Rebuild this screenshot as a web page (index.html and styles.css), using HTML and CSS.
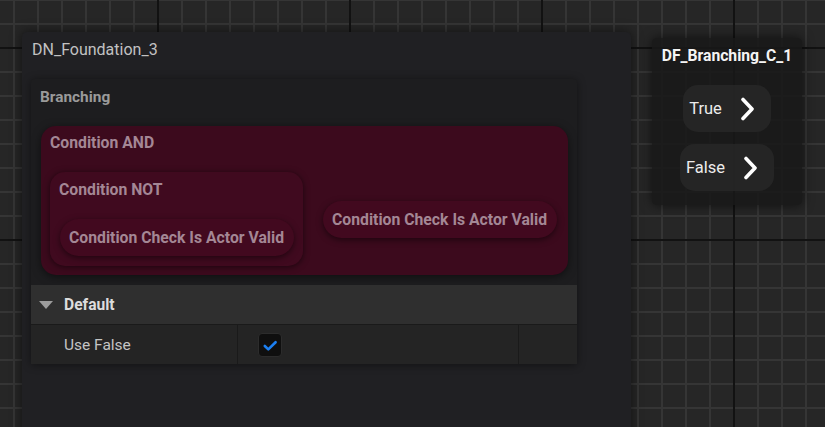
FILE: index.html
```html
<!DOCTYPE html>
<html lang="en">
<head>
<meta charset="utf-8">
<title>Graph</title>
<link rel="stylesheet" href="styles.css">
</head>
<body>
<div class="canvas">
  <section class="node node-main">
    <div class="node-title">DN_Foundation_3</div>
    <div class="card">
      <div class="card-title">Branching</div>
      <div class="cond cond-and">
        <div class="cond-title">Condition AND</div>
        <div class="cond-body">
          <div class="cond cond-not">
            <div class="cond-title">Condition NOT</div>
            <div class="pill">Condition Check Is Actor Valid</div>
          </div>
          <div class="pill">Condition Check Is Actor Valid</div>
        </div>
      </div>
      <div class="cat-header"><span class="caret"></span><span>Default</span></div>
      <div class="prop-row">
        <div class="prop-name">Use False</div>
        <div class="prop-value">
          <span class="checkbox">
            <svg width="24" height="24" viewBox="0 0 24 24"><polyline points="6.8,13 10.3,16.4 17.6,9.2" fill="none" stroke="#1c7ff0" stroke-width="2.6" stroke-linecap="round" stroke-linejoin="round"/></svg>
          </span>
        </div>
        <div class="prop-extra"></div>
      </div>
    </div>
  </section>

  <section class="node node-branch">
    <div class="branch-title">DF_Branching_C_1</div>
    <div class="outputs">
      <div class="out-pin"><span>True</span>
        <svg width="24" height="24" viewBox="0 0 24 24"><polyline points="8,2.5 17,12 8,21.5" fill="none" stroke="#ffffff" stroke-width="3.6" stroke-linecap="round" stroke-linejoin="round"/></svg>
      </div>
      <div class="out-pin"><span>False</span>
        <svg width="24" height="24" viewBox="0 0 24 24"><polyline points="8,2.5 17,12 8,21.5" fill="none" stroke="#ffffff" stroke-width="3.6" stroke-linecap="round" stroke-linejoin="round"/></svg>
      </div>
    </div>
  </section>
</div>
</body>
</html>
```

FILE: styles.css
```css
html, body {
  margin: 0;
  padding: 0;
}

body {
  width: 825px;
  height: 427px;
  overflow: hidden;
  font-family: Roboto, "Noto Sans", "Liberation Sans", sans-serif;
  background-color: #262626;
  background-image:
    linear-gradient(to right, #121212 2px, transparent 2px),
    linear-gradient(to bottom, #121212 2px, transparent 2px),
    linear-gradient(to right, #353535 2px, transparent 2px),
    linear-gradient(to bottom, #353535 2px, transparent 2px);
  background-size: 192px 192px, 192px 192px, 24px 24px, 24px 24px;
  background-position: 157px 0, 0 47px, 13px 0, 0 23px;
}

.canvas {
  position: relative;
  width: 825px;
  height: 427px;
  overflow: hidden;
}

/* ---------- main node ---------- */
.node-main {
  position: absolute;
  left: 22px;
  top: 32px;
  width: 609px;
  height: 420px;
  box-sizing: border-box;
  padding: 8px 0 0 9px;
  background: #202023;
  border-radius: 5px;
  box-shadow: 0 0 12px rgba(0, 0, 0, 0.55);
}

.node-title {
  padding-left: 1px;
  font-size: 16px;
  line-height: 20px;
  color: #c2c2c2;
}

.card {
  margin-top: 19px;
  width: 546px;
  padding-top: 8px;
  background: #1d1d1f;
  border-radius: 4px 4px 0 0;
  box-shadow: 0 1px 8px rgba(0, 0, 0, 0.45);
}

.card-title {
  padding-left: 9px;
  font-size: 15.4px;
  font-weight: 700;
  line-height: 20px;
  color: #9a9a9a;
}

.cond {
  border-radius: 15px;
}

.cond-title {
  font-size: 15.75px;
  font-weight: 700;
  line-height: 20px;
  color: #a48795;
}

.cond-and {
  margin: 19px 9px 10px 10px;
  padding: 7px 10px 9px 9px;
  background: #3c0a1d;
  box-shadow: 0 2px 8px rgba(0, 0, 0, 0.5);
}

.cond-body {
  margin-top: 19px;
  display: flex;
  align-items: center;
  gap: 20px;
}

.cond-not {
  padding: 8px 9px 10px 10px;
  background: #400a1f;
  box-shadow: 0 1px 6px rgba(0, 0, 0, 0.55);
}

.cond-not .cond-title {
  margin-left: -1px;
}

.cond-not .pill {
  margin-top: 19px;
}

.pill {
  display: flex;
  align-items: center;
  height: 37px;
  padding: 0 10px 0 9px;
  border-radius: 19px;
  background: #42091f;
  box-shadow: 0 2px 6px rgba(0, 0, 0, 0.5);
  font-size: 15.75px;
  font-weight: 700;
  color: #a48795;
  white-space: nowrap;
}

.cat-header {
  display: flex;
  align-items: center;
  gap: 11px;
  height: 39px;
  padding-left: 8px;
  background: #2f2f2f;
  font-size: 15.6px;
  font-weight: 700;
  color: #dcdcdc;
}

.caret {
  width: 0;
  height: 0;
  border-left: 7.5px solid transparent;
  border-right: 7.5px solid transparent;
  border-top: 8px solid #9c9c9c;
}

.prop-row {
  display: flex;
  height: 39px;
  border-top: 1px solid #1a1a1a;
  background: #242424;
}

.prop-name {
  display: flex;
  align-items: center;
  width: 207px;
  padding-left: 33px;
  box-sizing: border-box;
  border-right: 1px solid #1a1a1a;
  font-size: 15.5px;
  color: #c4c4c4;
}

.prop-value {
  display: flex;
  align-items: center;
  width: 281px;
  padding-left: 20px;
  box-sizing: border-box;
  border-right: 1px solid #1a1a1a;
}

.prop-extra {
  flex: 1;
}

.checkbox {
  display: block;
  width: 24px;
  height: 24px;
  box-sizing: border-box;
  border: 1px solid #2c2c2c;
  border-radius: 4px;
  background: #0f0f0f;
}

.checkbox svg {
  display: block;
  margin: -1px;
}

/* ---------- branching node ---------- */
.node-branch {
  position: absolute;
  left: 652px;
  top: 38px;
  width: 150px;
  height: 167px;
  box-sizing: border-box;
  padding-top: 8px;
  background: rgba(24, 24, 24, 0.86);
  border-radius: 4px;
  box-shadow: 0 0 12px rgba(0, 0, 0, 0.6);
}

.branch-title {
  text-align: center;
  font-size: 15.7px;
  font-weight: 700;
  line-height: 20px;
  color: #f4f4f4;
}

.outputs {
  margin-top: 19px;
  display: flex;
  flex-direction: column;
  align-items: center;
  gap: 12px;
}

.out-pin {
  display: flex;
  align-items: center;
  gap: 13px;
  height: 47px;
  padding: 0 12px 0 6px;
  border-radius: 15px;
  background: rgba(40, 40, 40, 0.8);
  font-size: 16.5px;
  color: #ececec;
}

.out-pin svg {
  display: block;
}
```
